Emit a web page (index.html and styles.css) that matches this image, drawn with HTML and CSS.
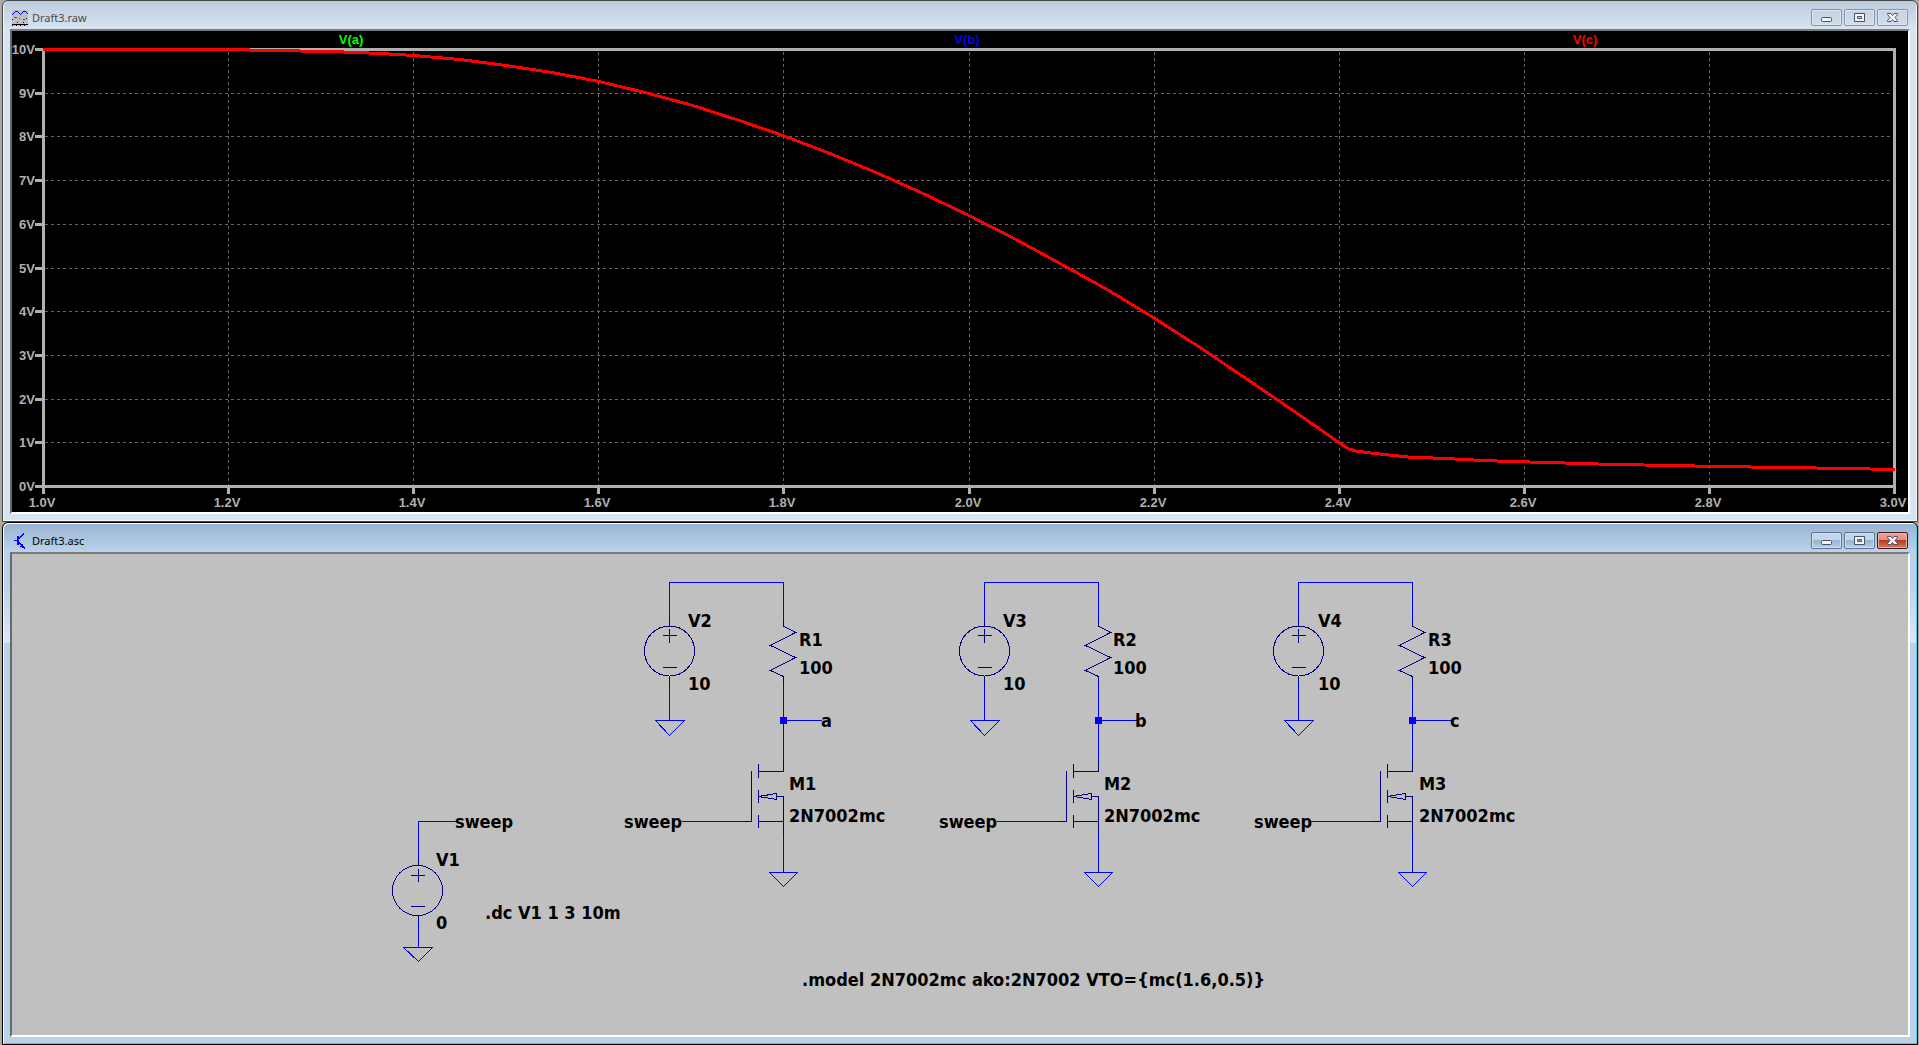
FILE: index.html
```html
<!DOCTYPE html>
<html lang="en">
<head>
<meta charset="utf-8">
<title>Draft3</title>
<link rel="stylesheet" href="styles.css">
</head>
<body>
<main class="workspace">
<section class="window window-plot" aria-label="Waveform window">
  <header class="titlebar">
    <svg class="title-icon" viewBox="0 0 16 16" aria-hidden="true" shape-rendering="crispEdges">
      <rect width="16" height="16" fill="#c0c0c0"/>
      <path d="M0 4.500h1M1 3.500h1M2 2.500h1M3 1.500h3M6 2.500h1M7 3.500h1M8 4.500h1M9 3.500h1M10 2.500h1M11 1.500h3M14 2.500h1M15 3.500h1" stroke="#00f"/>
      <path d="M2 7.500h3M7 8.500h1M11 9.500h2" stroke="#f00"/>
      <path d="M0 9.500h1M14 8.500h1M5 12.500h1M11 12.500h1M0 14.500h16M0 15.500h1M4 15.500h1M8 15.500h1M12 15.500h1" stroke="#000"/>
    </svg>
    <h1 class="title">Draft3.raw</h1>
    <div class="controls">
      <button class="control" type="button" aria-label="Minimize"><svg viewBox="0 0 29 15"><rect x="9.500" y="7.500" width="10" height="4" rx="1"/></svg></button>
      <button class="control" type="button" aria-label="Maximize"><svg viewBox="0 0 29 15"><path fill-rule="evenodd" d="M9.500 3.500h10v8h-10zM12.500 6.500v2h4v-2z"/></svg></button>
      <button class="control" type="button" aria-label="Close"><svg viewBox="0 0 29 15"><path d="M9.500 3.500h3.500l1.500 2 1.500-2h3.500v1l-2.500 3 2.500 3v1h-3.500l-1.500-2-1.500 2h-3.500v-1l2.500-3-2.500-3z"/></svg></button>
    </div>
  </header>
  <svg class="client plot" viewBox="12 31 1896 481" role="img" aria-label="V(a), V(b), V(c) against sweep voltage">
    <g class="grid">
      <path d="M45 93.500H1893M45 136.500H1893M45 180.500H1893M45 224.500H1893M45 268.500H1893M45 311.500H1893M45 355.500H1893M45 399.500H1893M45 442.500H1893"/>
      <path d="M228.500 52V485M413.500 52V485M598.500 52V485M783.500 52V485M969.500 52V485M1154.500 52V485M1339.500 52V485M1524.500 52V485M1709.500 52V485"/>
    </g>
    <g class="axis">
      <rect x="43.500" y="49.500" width="1851" height="437"/>
      <path d="M35 49.500h8M35 93.500h8M35 136.500h8M35 180.500h8M35 224.500h8M35 268.500h8M35 311.500h8M35 355.500h8M35 399.500h8M35 442.500h8M35 486.500h8"/>
      <path d="M43.500 486v8M228.500 486v8M413.500 486v8M598.500 486v8M783.500 486v8M969.500 486v8M1154.500 486v8M1339.500 486v8M1524.500 486v8M1709.500 486v8M1894.500 486v8"/>
    </g>
    <polyline class="trace" points="43,49.500 230,49.500 270,50.500 330,51.500 357,52.500 380,53.500 414,55.500 460,59.500 506,65.500 552,72.500 599,81.500 645,92.500 691,105 738,120 784,136 830,153.500 876,172.500 922,193 969,215.500 1015,239 1061,264 1108,290 1154,318 1200,347.500 1246,378.500 1293,410.500 1339,442.500 1349,449 1356,451 1371,453 1389,455 1408,457 1445,458.500 1483,460.500 1511,461.500 1548,462.500 1598,464 1644,465 1695,466 1751,467 1816,468 1870,469 1895,469.500"/>
    <g class="label label-y">
      <text x="35" y="54">10V</text><text x="35" y="98">9V</text><text x="35" y="141">8V</text><text x="35" y="185">7V</text><text x="35" y="229">6V</text><text x="35" y="273">5V</text><text x="35" y="316">4V</text><text x="35" y="360">3V</text><text x="35" y="404">2V</text><text x="35" y="447">1V</text><text x="35" y="491">0V</text>
    </g>
    <g class="label label-x">
      <text x="42" y="507">1.0V</text><text x="227" y="507">1.2V</text><text x="412" y="507">1.4V</text><text x="597" y="507">1.6V</text><text x="782" y="507">1.8V</text><text x="968" y="507">2.0V</text><text x="1153" y="507">2.2V</text><text x="1338" y="507">2.4V</text><text x="1523" y="507">2.6V</text><text x="1708" y="507">2.8V</text><text x="1893" y="507">3.0V</text>
    </g>
    <g class="label label-x">
      <text class="trace-a" x="351" y="44">V(a)</text><text class="trace-b" x="967" y="44">V(b)</text><text class="trace-c" x="1585" y="44">V(c)</text>
    </g>
  </svg>
</section>

<section class="window window-schematic" aria-label="Schematic window">
  <header class="titlebar">
    <svg class="title-icon" viewBox="0 0 16 16" aria-hidden="true" shape-rendering="crispEdges">
      <path d="M2 7.500h4M7 5.500l5-5M7 9.500l6 6" fill="none" stroke="#00f"/>
      <path d="M5 3h2v9h-2zM11 11v3h-3v-1h1v-1h1v-1zM10 14h3v2h-1l-1-1h-1z" fill="#00f"/>
    </svg>
    <h1 class="title">Draft3.asc</h1>
    <div class="controls">
      <button class="control" type="button" aria-label="Minimize"><svg viewBox="0 0 29 15"><rect x="9.500" y="7.500" width="10" height="4" rx="1"/></svg></button>
      <button class="control" type="button" aria-label="Maximize"><svg viewBox="0 0 29 15"><path fill-rule="evenodd" d="M9.500 3.500h10v8h-10zM12.500 6.500v2h4v-2z"/></svg></button>
      <button class="control control-close" type="button" aria-label="Close"><svg viewBox="0 0 29 15"><path d="M9.500 3.500h3.500l1.500 2 1.500-2h3.500v1l-2.500 3 2.500 3v1h-3.500l-1.500-2-1.500 2h-3.500v-1l2.500-3-2.500-3z"/></svg></button>
    </div>
  </header>
  <svg class="client schematic" viewBox="12 554 1896 481" role="img" aria-label="Three 2N7002mc MOSFET stages driven by a swept source">
    <defs>
      <g id="stage">
        <g class="wire">
          <path d="M669.500 621V582.500H783.500V621M669.500 682V720.500M783.500 682V760M783.500 720.500H822M682 821.500H744M783.500 834V872.500"/>
          <path d="M655.500 720.500H684.500L669.500 735.500ZM769.500 872.500H797.500L783.500 886.500Z"/>
          <rect class="node" x="780" y="717" width="7" height="7"/>
        </g>
        <g class="part">
          <circle cx="669.500" cy="651" r="25"/>
          <path d="M669.500 621V626M669.500 676V682M663 635.500H677M669.500 629V643M663 667.500H677"/>
          <path d="M783.500 621V626L795.500 632.500L770.500 645.500L795.500 657.500L770.500 670.500L783.500 676.500V682"/>
          <path d="M783.500 760V771.500H758.500M758.500 764V778M758.500 790V803M758.500 815V828M751.500 771V821.500H744M758.500 821.500H783.500M776.500 796.500H783.500V834M758.500 796.500L776.500 793.500V799.500Z"/>
        </g>
      </g>
    </defs>
    <use href="#stage"/>
    <use href="#stage" x="315"/>
    <use href="#stage" x="629"/>
    <g class="wire">
      <path d="M457 821.500H418.500V860M418.500 921V947.500M403.500 947.500H432.500L418.500 961.500Z"/>
    </g>
    <g class="part">
      <circle cx="417.500" cy="890.500" r="25"/>
      <path d="M418.500 860V865M418.500 916V921M411 875.500H425M418.500 869V882M411 906.500H425"/>
    </g>
    <g class="note">
      <text x="688" y="627">V2</text><text x="688" y="690">10</text><text x="799" y="646">R1</text><text x="799" y="674">100</text><text x="821" y="727">a</text><text x="789" y="790">M1</text><text x="789" y="822">2N7002mc</text><text x="624" y="828">sweep</text>
      <text x="1003" y="627">V3</text><text x="1003" y="690">10</text><text x="1113" y="646">R2</text><text x="1113" y="674">100</text><text x="1135" y="727">b</text><text x="1104" y="790">M2</text><text x="1104" y="822">2N7002mc</text><text x="939" y="828">sweep</text>
      <text x="1318" y="627">V4</text><text x="1318" y="690">10</text><text x="1428" y="646">R3</text><text x="1428" y="674">100</text><text x="1450" y="727">c</text><text x="1419" y="790">M3</text><text x="1419" y="822">2N7002mc</text><text x="1254" y="828">sweep</text>
      <text x="455" y="828">sweep</text><text x="436" y="866">V1</text><text x="436" y="929">0</text>
      <text x="485" y="919">.dc V1 1 3 10m</text>
      <text x="802" y="986">.model 2N7002mc ako:2N7002 VTO={mc(1.6,0.5)}</text>
    </g>
  </svg>
</section>
</main>
</body>
</html>
```
FILE: styles.css
```css
* { box-sizing: border-box; }

body {
  margin: 0;
  background: #aba9a2;
  font-family: "Noto Sans", "Open Sans", sans-serif;
}

.workspace {
  padding: 0 1px 0 2px;
}

.window {
  display: flex;
  flex-direction: column;
  border: 1px solid #444;
  border-radius: 6px 6px 0 0;
}

.window-plot {
  background: linear-gradient(#bccbdb, #d7e4f2 28px);
  box-shadow: inset 1px 0 #f4f8fc, inset -1px -1px #f4f8fc;
  padding: 0 7px 7px;
}

.window-schematic {
  background: linear-gradient(#99b4d1, #b9d1ea 28px, #b9d1ea 60px, #dde8f6 120px, #b9d1ea 120px);
  border-color: #000;
  box-shadow: inset 1px 1px #fff, inset -1px -1px #3fd0ee;
  padding: 1px 7px 7px;
}

.titlebar {
  display: flex;
  align-items: flex-end;
  height: 28px;
  padding: 0 2px 3px;
  gap: 4px;
}

.title-icon {
  width: 16px;
  height: 16px;
}

.title {
  flex: 1;
  margin: 0;
  font-size: 11px;
  line-height: 17px;
  font-weight: 400;
  color: #000;
}

.window-plot .title { color: #4b4b4b; }

.controls {
  display: flex;
  gap: 2px;
}

.control {
  width: 31px;
  height: 17px;
  padding: 0;
  border: 1px solid #8394ae;
  border-radius: 2px;
  background: linear-gradient(#c5d3e2, #d0deec);
  box-shadow: inset 0 0 0 1px #dbe6f1;
}

.control svg {
  display: block;
  width: 29px;
  height: 15px;
  fill: #f4f4f4;
  stroke: #4a5160;
}

.window-schematic .control {
  border-color: #5d7492;
  background: linear-gradient(#c3d5ea 50%, #98b3d1 50%, #b8d0e9);
  box-shadow: inset 0 0 0 1px #cfe0f1;
}

.window-schematic .control-close {
  border-color: #46151d;
  background: linear-gradient(#e8a79c, #dc8a7d 50%, #b8391f 50%, #d67b62);
  box-shadow: inset 0 0 0 1px #e9b3a6;
}

.client {
  display: block;
  width: 100%;
  height: auto;
  border: 2px solid;
  border-color: #7c7c7c #fff #fff #696969;
}

.plot { background: #000; }
.schematic { background: #c0c0c0; }

.grid, .axis, .trace, .wire, .part {
  fill: none;
  shape-rendering: crispEdges;
}

.grid {
  stroke: #646464;
  stroke-dasharray: 3 3;
}

.axis {
  stroke: #b0b0b0;
  stroke-width: 3;
}

.trace {
  stroke: #f00;
  stroke-width: 3;
}

.label {
  font: bold 13px "Liberation Sans", Arial, sans-serif;
  fill: #b0b0b0;
}

.label-y { text-anchor: end; }
.label-x { text-anchor: middle; }
.trace-a { fill: #0f0; }
.trace-b { fill: #00f; }
.trace-c { fill: #f00; }

.wire { stroke: #00f; }
.node { fill: #00f; stroke: none; }
.part { stroke: #000080; }

.note {
  font: bold 18px "DejaVu Sans Condensed", "Noto Sans", sans-serif;
  fill: #000;
}
```
